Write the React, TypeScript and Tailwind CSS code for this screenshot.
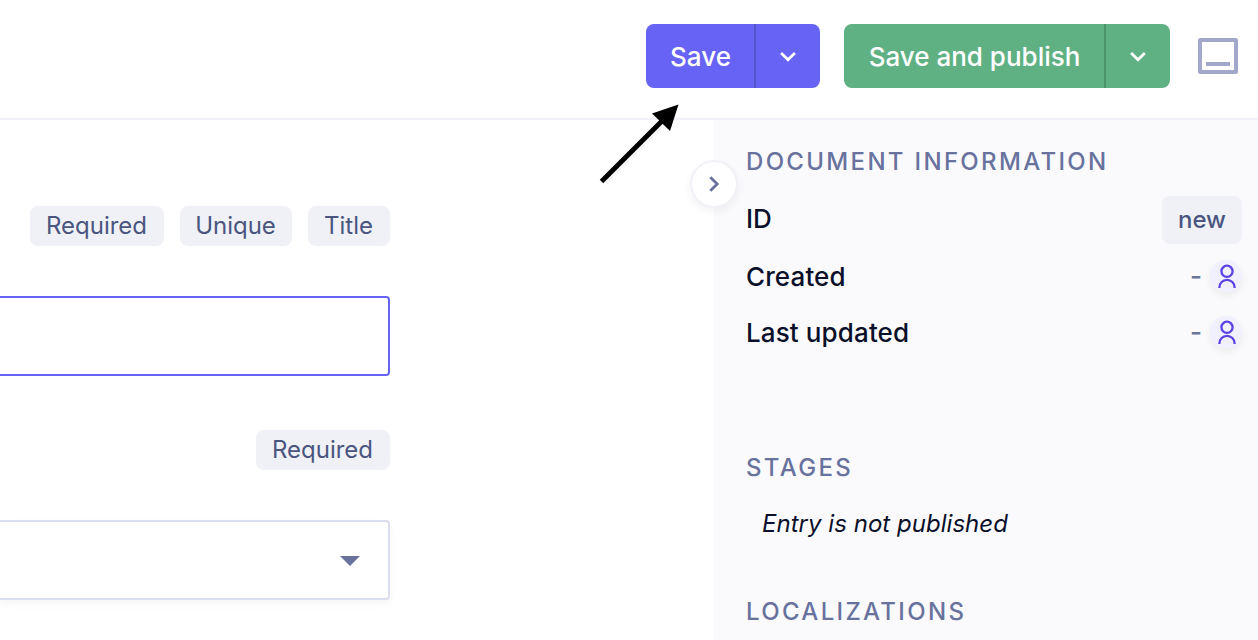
import React from "react";

function ChevronDown() {
  return (
    <svg width="64" height="64" viewBox="0 0 64 64" fill="none">
      <path d="M25.1 29L32 35.7L38.9 29" stroke="white" strokeWidth="2.8" />
    </svg>
  );
}

function Tag({ width, children }: { width: string; children: React.ReactNode }) {
  return (
    <span
      className={`flex h-10 items-center justify-center rounded-lg bg-[#f0f1f6] pr-px text-[24px] leading-10 text-[#4a5580] ${width}`}
    >
      {children}
    </span>
  );
}

function SectionTitle({ children }: { children: React.ReactNode }) {
  return (
    <h2 className="h-8 text-[24px] leading-[34px] font-medium tracking-[2.32px] whitespace-nowrap text-[#68729d]">
      {children}
    </h2>
  );
}

function UserStamp() {
  return (
    <div className="flex items-center">
      <span className="mr-2 text-[26px] leading-8 font-medium text-[#68729d]">-</span>
      <span className="size-8 rounded-full bg-[#f1f0ff] shadow-[0_4px_8px_rgba(0,0,0,0.06)]">
        <svg width="32" height="32" viewBox="0 0 32 32" fill="none" stroke="#5b43e3" strokeWidth="2.3">
          <circle cx="17" cy="11.3" r="5.6" />
          <path d="M9.4 28v-.6a7.6 7.6 0 0 1 15.2 0v.6" />
        </svg>
      </span>
    </div>
  );
}

export default function App() {
  return (
    <div className="relative flex h-[640px] w-[1258px] flex-col overflow-hidden bg-white font-['Inter',sans-serif] [font-optical-sizing:none]">
      <header className="flex h-[120px] shrink-0 items-start justify-end border-b-2 border-[#f1f1f7] pt-6 pr-5">
        <div className="flex h-16 overflow-hidden rounded-lg bg-[#6663f5] text-white">
          <button className="w-[110px] border-r-2 border-[#5552cb] pt-0.5 pl-px text-[26px] leading-8 font-medium">
            Save
          </button>
          <button aria-label="Save options"><ChevronDown /></button>
        </div>
        <div className="ml-6 flex h-16 overflow-hidden rounded-lg bg-[#5fb184] text-white">
          <button className="w-[262px] border-r-2 border-[#4c956c] pt-0.5 pl-px text-[26px] leading-8 font-medium">
            Save and publish
          </button>
          <button aria-label="Publish options"><ChevronDown /></button>
        </div>
        <svg className="mt-3.5 ml-7" width="40" height="36" viewBox="0 0 40 36" fill="none">
          <rect x="2" y="2" width="36" height="32" rx="0.5" stroke="#a1a8c9" strokeWidth="4" strokeLinejoin="round" />
          <path d="M8 26H32" stroke="#a1a8c9" strokeWidth="4" />
        </svg>
      </header>

      <div className="flex min-h-0 flex-1">
        <main className="w-[714px] shrink-0 pt-[86px]">
          <div className="flex w-[390px] flex-col">
            <div className="flex justify-end gap-4">
              <Tag width="w-[134px]">Required</Tag>
              <Tag width="w-[112px]">Unique</Tag>
              <Tag width="w-[82px]">Title</Tag>
            </div>
            <div className="mt-[50px] h-20 rounded-r-[4px] border-2 border-l-0 border-[#6663f5]" />
            <div className="mt-[54px] flex justify-end">
              <Tag width="w-[134px]">Required</Tag>
            </div>
            <div className="mt-[50px] flex h-20 items-center justify-end rounded-r-[4px] border-2 border-l-0 border-[#dadeee] pr-7 shadow-[0_4px_8px_rgba(0,0,0,0.04)]">
              <svg width="20" height="10" viewBox="0 0 20 10" className="mt-0.5">
                <path d="M0 0H20L10 10Z" fill="#68729d" />
              </svg>
            </div>
          </div>
        </main>

        <aside className="flex-1 bg-[#fafafd] pt-[25px] pr-4 pl-8 text-[26px] leading-8 font-medium text-[#0a1029]">
          <SectionTitle>DOCUMENT INFORMATION</SectionTitle>
          <div className="mt-[19px] flex h-12 items-center justify-between">
            <span className="pb-0.5">ID</span>
            <span className="flex h-12 items-center rounded-lg bg-[#f0f1f6] px-4 text-[24px] text-[#4a5580]">new</span>
          </div>
          <div className="mt-4 flex h-8 items-center justify-between">
            <span className="pt-0.5 tracking-[0.12px]">Created</span>
            <UserStamp />
          </div>
          <div className="mt-6 flex h-8 items-center justify-between">
            <span className="pt-0.5 tracking-[0.12px]">Last updated</span>
            <UserStamp />
          </div>
          <div className="mt-[103px]">
            <SectionTitle>STAGES</SectionTitle>
          </div>
          <p className="mt-6 ml-4 h-8 text-[24px] leading-[34px] font-normal tracking-[0.03px] italic">
            Entry is not published
          </p>
          <div className="mt-14">
            <SectionTitle>LOCALIZATIONS</SectionTitle>
          </div>
        </aside>
      </div>

      <button
        aria-label="Collapse sidebar"
        className="absolute top-[160px] left-[690px] size-12 rounded-full border-2 border-[#f1f1f7] bg-white shadow-[0_4px_8px_rgba(0,0,0,0.05)]"
      >
        <svg width="44" height="44" viewBox="0 0 44 44" fill="none">
          <path d="M18.3 15.2L25.2 22L18.3 28.8" stroke="#68729d" strokeWidth="2.8" />
        </svg>
      </button>
      <svg className="absolute top-[100px] left-[596px]" width="90" height="86" viewBox="0 0 90 86">
        <path d="M5.5 81.5L68 19" stroke="black" strokeWidth="5" />
        <path d="M82.5 4.5L56 13.5L74 31Z" fill="black" />
      </svg>
    </div>
  );
}
